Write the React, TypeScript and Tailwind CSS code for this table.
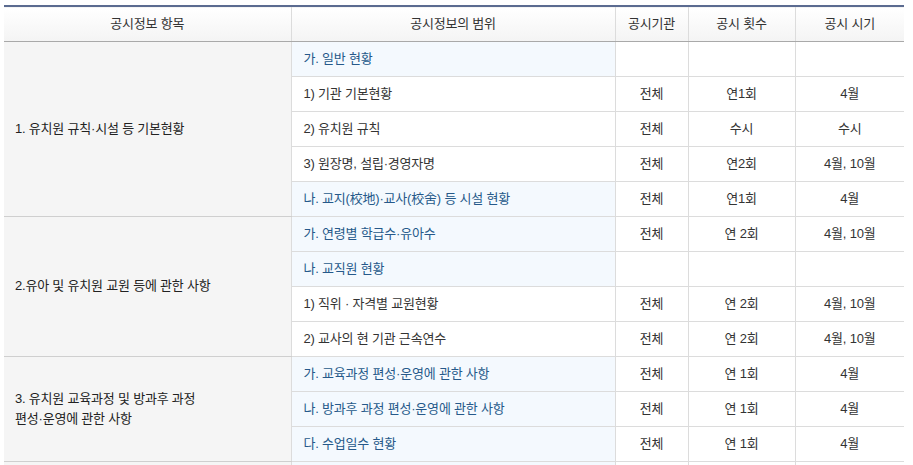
import React from "react";

type Row = {
  scope: string;
  blue?: boolean;
  org?: string;
  count?: string;
  time?: string;
};

type Section = { title: React.ReactNode; rows: Row[] };

const sections: Section[] = [
  {
    title: "1. 유치원 규칙·시설 등 기본현황",
    rows: [
      { scope: "가. 일반 현황", blue: true },
      { scope: "1) 기관 기본현황", org: "전체", count: "연1회", time: "4월" },
      { scope: "2) 유치원 규칙", org: "전체", count: "수시", time: "수시" },
      { scope: "3) 원장명, 설립·경영자명", org: "전체", count: "연2회", time: "4월, 10월" },
      { scope: "나. 교지(校地)·교사(校舍) 등 시설 현황", blue: true, org: "전체", count: "연1회", time: "4월" },
    ],
  },
  {
    title: "2.유아 및 유치원 교원 등에 관한 사항",
    rows: [
      { scope: "가. 연령별 학급수·유아수", blue: true, org: "전체", count: "연 2회", time: "4월, 10월" },
      { scope: "나. 교직원 현황", blue: true },
      { scope: "1) 직위 · 자격별 교원현황", org: "전체", count: "연 2회", time: "4월, 10월" },
      { scope: "2) 교사의 현 기관 근속연수", org: "전체", count: "연 2회", time: "4월, 10월" },
    ],
  },
  {
    title: (
      <>
        3. 유치원 교육과정 및 방과후 과정
        <br />
        편성·운영에 관한 사항
      </>
    ),
    rows: [
      { scope: "가. 교육과정 편성·운영에 관한 사항", blue: true, org: "전체", count: "연 1회", time: "4월" },
      { scope: "나. 방과후 과정 편성·운영에 관한 사항", blue: true, org: "전체", count: "연 1회", time: "4월" },
      { scope: "다. 수업일수 현황", blue: true, org: "전체", count: "연 1회", time: "4월" },
    ],
  },
  {
    title: "",
    rows: [{ scope: "", blue: true }],
  },
];

const cellB = "border-b border-[#dcdcdc]";

export default function App() {
  return (
    <div
      className="w-[913px] h-[465px] overflow-hidden bg-white pt-[5px] pl-[4px]"
      style={{ fontFamily: '"Liberation Sans", "Noto Sans CJK KR", sans-serif' }}
    >
      <table className="w-[900px] border-collapse table-fixed text-[13px] text-[#333] tracking-[-0.2px]">
        <colgroup>
          <col className="w-[287px]" />
          <col className="w-[324px]" />
          <col className="w-[73px]" />
          <col className="w-[107px]" />
          <col className="w-[109px]" />
        </colgroup>
        <thead>
          <tr className="h-[35px] border-t-2 border-[#5b6b90] bg-gradient-to-b from-white to-[#f4f4f4]">
            {["공시정보 항목", "공시정보의 범위", "공시기관", "공시 횟수", "공시 시기"].map((h, i) => (
              <th
                key={h}
                className={`font-normal text-center border-b border-[#a9a9a9] ${i < 4 ? "border-r border-r-[#dcdcdc]" : ""}`}
              >
                {h}
              </th>
            ))}
          </tr>
        </thead>
        <tbody>
          {sections.map((s, si) =>
            s.rows.map((r, ri) => (
              <tr key={`${si}-${ri}`} className="h-[35px]">
                {ri === 0 && (
                  <td
                    rowSpan={s.rows.length}
                    className="bg-[#f5f5f5] text-[#222] border-b border-[#cfcfcf] border-r border-r-[#dcdcdc] pl-[11px] align-middle leading-[20px]"
                  >
                    {s.title}
                  </td>
                )}
                <td
                  className={`${cellB} border-r border-r-[#dcdcdc] pl-[12px] whitespace-nowrap ${
                    r.blue ? "bg-[#f4f9fe] text-[#26598a]" : ""
                  }`}
                >
                  {r.scope}
                </td>
                <td className={`${cellB} border-r border-r-[#dcdcdc] text-center`}>{r.org ?? ""}</td>
                <td className={`${cellB} border-r border-r-[#dcdcdc] text-center`}>{r.count ?? ""}</td>
                <td className={`${cellB} text-center`}>{r.time ?? ""}</td>
              </tr>
            ))
          )}
        </tbody>
      </table>
    </div>
  );
}
